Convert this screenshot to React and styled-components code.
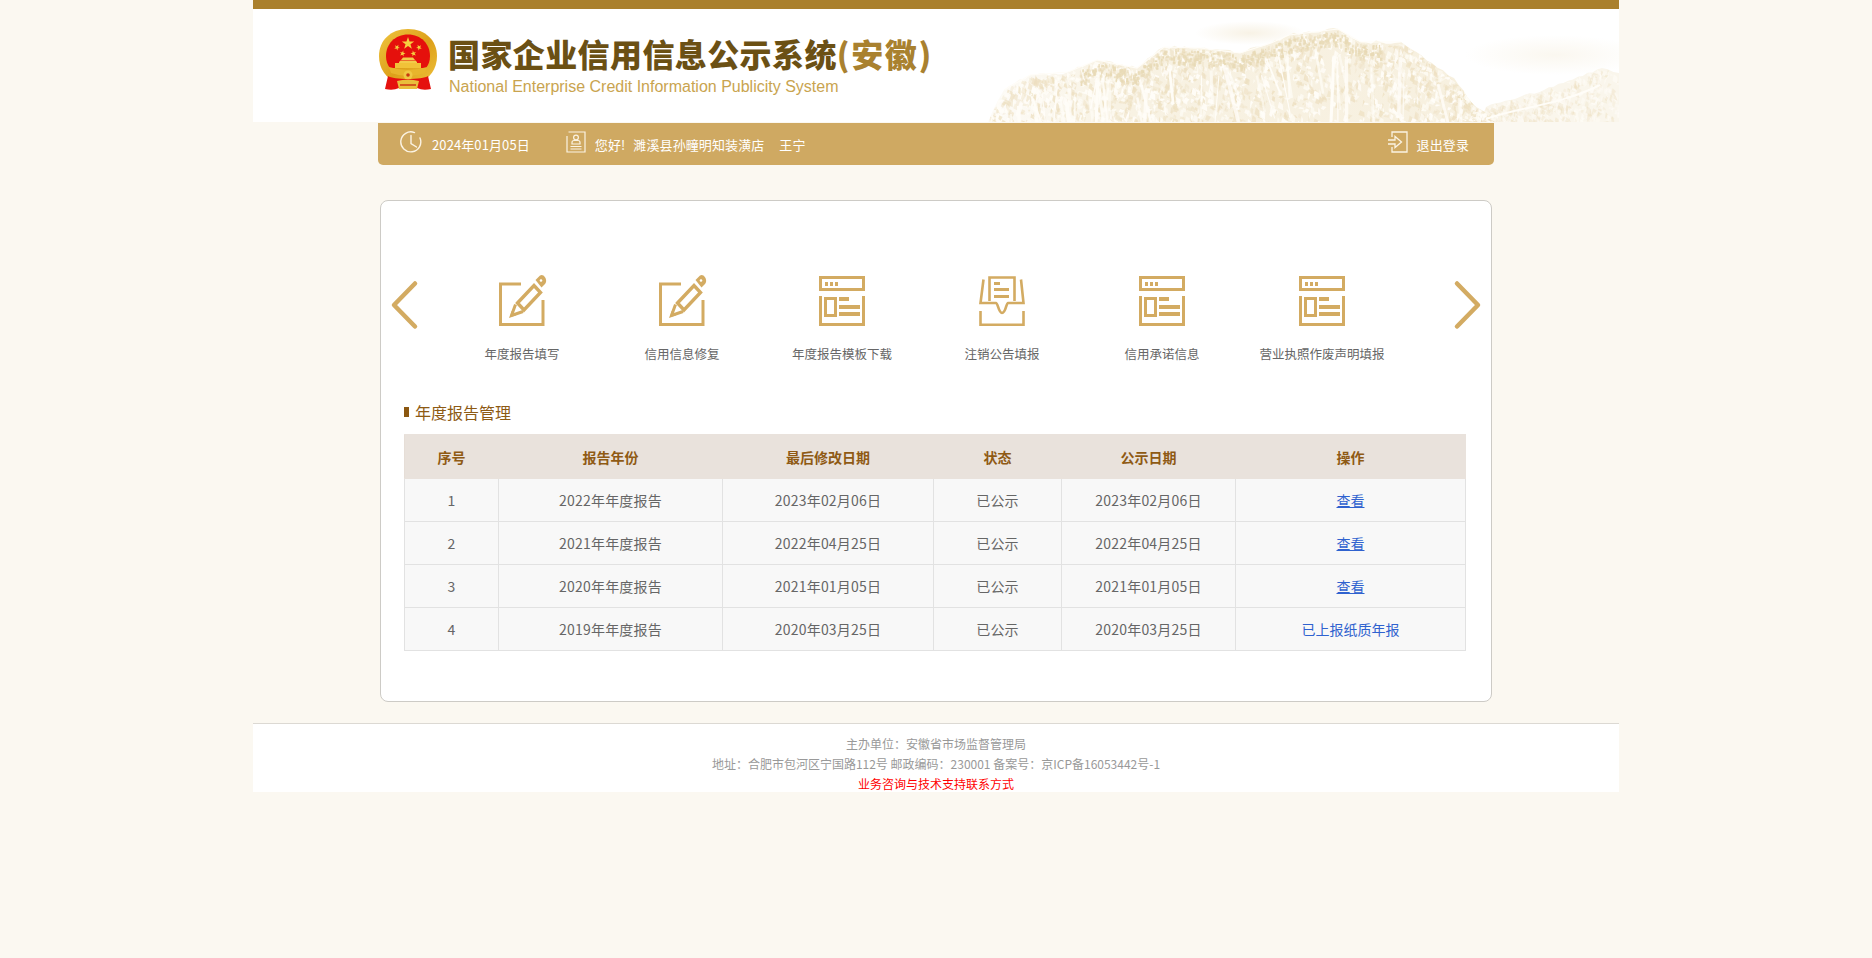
import React from "react";
import styled, { createGlobalStyle } from "styled-components";

const FONT = `"Noto Sans CJK SC", "Liberation Sans", sans-serif`;
const GOLD = "#d3ab62";

const GlobalStyle = createGlobalStyle`
  html, body {
    margin: 0;
    padding: 0;
    background: #fbf8f1;
    font-family: ${FONT};
  }
`;

const Wrapper = styled.div`
  width: 1366px;
  margin: 0 auto;
`;

const Header = styled.header`
  position: relative;
  height: 113px;
  border-top: 9px solid #aa802d;
  background: #fff;
  overflow: hidden;
`;

const Brand = styled.div`
  position: relative;
  z-index: 1;
  display: flex;
  align-items: flex-start;
  padding: 20px 0 0 126px;
`;

const BrandText = styled.div`
  margin-left: 11px;
  padding-top: 2px;
`;

const BrandTitle = styled.div`
  display: flex;
  height: 44px;
  font-size: 32px;
  line-height: 44px;
  font-weight: 900;
  letter-spacing: 0.4px;
  color: #6b5014;
  white-space: nowrap;
  span {
    color: #a9812f;
    letter-spacing: 1.6px;
  }
`;

const BrandSub = styled.div`
  margin-top: 2px;
  margin-left: 1px;
  font-family: "Liberation Sans", sans-serif;
  font-size: 16px;
  line-height: 20px;
  color: #c9a44f;
  white-space: nowrap;
`;

const Scenery = styled.svg`
  position: absolute;
  right: 0;
  top: 0;
`;

const NavBar = styled.nav`
  width: 1116px;
  height: 42px;
  margin: 1px auto 0;
  padding: 0 25px 0 21px;
  box-sizing: border-box;
  display: flex;
  align-items: center;
  background: #cfa962;
  border-radius: 0 0 5px 5px;
  color: #fff;
  font-size: 13px;
  letter-spacing: 0.1px;
`;

const NavItem = styled.div`
  display: flex;
  align-items: center;
  margin-left: ${(p) => (p.$right ? "auto" : `${p.$gap || 0}px`)};
  white-space: nowrap;
  svg {
    margin-right: 9px;
    margin-top: -5px;
  }
`;

const Spaced = styled.span`
  margin-left: ${(p) => p.$gap}px;
`;

const Card = styled.main`
  width: 1112px;
  height: 502px;
  margin: 35px auto 0;
  padding-top: 69px;
  box-sizing: border-box;
  background: #fff;
  border: 1px solid #cdcbc6;
  border-radius: 8px;
`;

const Carousel = styled.div`
  display: flex;
  align-items: flex-start;
  padding-left: 9px;
`;

const Arrow = styled.svg`
  flex: none;
  margin-top: 10px;
`;

const Shortcuts = styled.div`
  display: flex;
  width: 960px;
  margin: 0 50px 0 22px;
`;

const Shortcut = styled.a`
  width: 160px;
  display: flex;
  flex-direction: column;
  align-items: center;
  color: #666;
  font-size: 12.5px;
  line-height: 20px;
  text-decoration: none;
  white-space: nowrap;
  svg {
    margin-bottom: 10px;
  }
`;

const SectionTitle = styled.h2`
  display: flex;
  align-items: center;
  margin: 37px 0 11px 23px;
  font-size: 16px;
  line-height: 22px;
  font-weight: 400;
  color: #8d5a14;
  &::before {
    content: "";
    width: 5px;
    height: 10px;
    margin-right: 6px;
    background: #8b5710;
  }
`;

const Table = styled.table`
  width: 1061px;
  margin-left: 23px;
  table-layout: fixed;
  border-collapse: collapse;
  font-size: 14px;
  text-align: center;
  color: #666;
  th {
    height: 43px;
    padding: 0;
    background: #e9e2dc;
    border: 1px solid #e9e2dc;
    border-left-color: #e6ded7;
    color: #8f5a14;
    font-weight: 700;
  }
  td {
    height: 42px;
    padding: 0;
    background: #f8f8f8;
    border: 1px solid #e2e2e2;
    letter-spacing: 0.2px;
  }
`;

const ActionLink = styled.a`
  color: #2f62cf;
  letter-spacing: 0;
  text-decoration: ${(p) => (p.$plain ? "none" : "underline")};
`;

const Footer = styled.footer`
  height: 69px;
  margin-top: 21px;
  padding-top: 10px;
  box-sizing: border-box;
  border-top: 1px solid #dcd9d3;
  background: #fff;
  text-align: center;
  font-size: 12px;
  line-height: 20px;
  color: #999;
`;

const Hotline = styled.div`
  color: #f00;
`;

// simple seeded random so the mountains come out the same on each load
const seeded = (start) => {
  let s = start;
  return () => {
    s = (s * 16807) % 2147483647;
    return (s - 1) / 2147483646;
  };
};

// break a rough outline into small jagged steps
const roughen = (ridge, seed, amount) => {
  const rnd = seeded(seed);
  const out = [];
  for (let i = 0; i < ridge.length - 1; i++) {
    const [x1, y1] = ridge[i];
    const [x2, y2] = ridge[i + 1];
    const steps = Math.max(1, Math.round((x2 - x1) / 5));
    for (let k = 0; k < steps; k++) {
      const t = k / steps;
      const j = k === 0 ? 0 : (rnd() - 0.5) * amount;
      out.push([x1 + t * (x2 - x1), y1 + t * (y2 - y1) + j]);
    }
  }
  out.push(ridge[ridge.length - 1]);
  return out;
};

const mainRidge = roughen(
  [
    [38, 113], [54, 81], [80, 66], [118, 63], [147, 51], [187, 59], [214, 38], [250, 39],
    [290, 44], [321, 34], [339, 26], [388, 20], [411, 33], [451, 33], [482, 54], [504, 69],
    [522, 94], [545, 113],
  ],
  77,
  3.500
);

const farRidge = roughen(
  [[530, 113], [536, 98], [594, 81], [652, 59], [669, 64], [669, 113]],
  31,
  2
);

const topOf = (ridge, x) => {
  for (let i = 0; i < ridge.length - 1; i++) {
    const [x1, y1] = ridge[i];
    const [x2, y2] = ridge[i + 1];
    if (x >= x1 && x <= x2 && x2 !== x1) return y1 + ((x - x1) / (x2 - x1)) * (y2 - y1);
  }
  return 113;
};

const buildFacets = (ridge, count, from, to, strength, seed) => {
  const rnd = seeded(seed);
  const list = [];
  for (let i = 0; i < count; i++) {
    const x = from + rnd() * (to - from);
    const top = topOf(ridge, x);
    const y = top + Math.pow(rnd(), 1.2) * (113 - top);
    const w = 1 + rnd() * 3.500;
    const h = 2 + rnd() * 8;
    const lean = (rnd() - 0.5) * 5;
    const dark = rnd() > 0.5;
    list.push({
      points: `${x},${y} ${x + w},${y + h * 0.3} ${x + lean + w * 0.5},${y + h} ${x - w * 0.4},${y + h * 0.7}`,
      fill: dark ? "#eddfc0" : "#fffdf8",
      opacity: (dark ? 0.3 + rnd() * 0.5 : 0.5 + rnd() * 0.5) * strength,
    });
  }
  return list;
};

// darker band of trees just under the crest
const buildTrees = (seed) => {
  const rnd = seeded(seed);
  const list = [];
  for (let i = 0; i < 520; i++) {
    const x = 130 + rnd() * 300;
    const y = topOf(mainRidge, x) + 2 + rnd() * 14;
    list.push({ x, y, w: 1 + rnd() * 2, h: 1.500 + rnd() * 3, opacity: 0.5 + rnd() * 0.5 });
  }
  return list;
};

// pale rock faces running down from the ridge
const buildStreaks = (seed) => {
  const rnd = seeded(seed);
  const list = [];
  for (let i = 0; i < 46; i++) {
    const x = 60 + rnd() * 450;
    const y = topOf(mainRidge, x) + 12 + rnd() * 18;
    const lean = (rnd() - 0.3) * 22;
    const len = 25 + rnd() * 60;
    list.push({ d: `M${x} ${y} L${x + lean} ${y + len}`, width: 1 + rnd() * 3, opacity: 0.5 + rnd() * 0.5 });
  }
  return list;
};

const mainFacets = buildFacets(mainRidge, 2000, 40, 545, 1, 4711);
const farFacets = buildFacets(farRidge, 500, 530, 669, 0.6, 911);
const trees = buildTrees(2203);
const streaks = buildStreaks(6101);

const toPoints = (ridge) => ridge.map((p) => p.join(",")).join(" ");

const SceneryArt = () => (
  <Scenery width="669" height="113" viewBox="0 0 669 113">
    <defs>
      <linearGradient id="ridgeFade" x1="0" x2="1" y1="0" y2="0">
        <stop offset="0" stopColor="#f9f4e8" stopOpacity="0.3" />
        <stop offset="0.25" stopColor="#f8f2e3" />
        <stop offset="1" stopColor="#f7f0df" />
      </linearGradient>
      <radialGradient id="haze">
        <stop offset="0" stopColor="#f6efdf" stopOpacity="0.8" />
        <stop offset="1" stopColor="#f6efdf" stopOpacity="0" />
      </radialGradient>
      <clipPath id="mainClip">
        <polygon points={toPoints(mainRidge)} />
      </clipPath>
      <clipPath id="farClip">
        <polygon points={toPoints(farRidge)} />
      </clipPath>
    </defs>
    <ellipse cx="300" cy="24" rx="55" ry="12" fill="url(#haze)" />
    <ellipse cx="605" cy="46" rx="90" ry="20" fill="url(#haze)" opacity="0.6" />
    <polygon points={toPoints(farRidge)} fill="#faf6ec" />
    <g clipPath="url(#farClip)">
      {farFacets.map((f, i) => (
        <polygon key={i} points={f.points} fill={f.fill} opacity={f.opacity} />
      ))}
    </g>
    <polygon points={toPoints(mainRidge)} fill="url(#ridgeFade)" />
    <g clipPath="url(#mainClip)">
      {mainFacets.map((f, i) => (
        <polygon key={i} points={f.points} fill={f.fill} opacity={f.opacity} />
      ))}
      {trees.map((t, i) => (
        <rect key={i} x={t.x} y={t.y} width={t.w} height={t.h} fill="#e8dab6" opacity={t.opacity} />
      ))}
      {streaks.map((s, i) => (
        <path key={i} d={s.d} stroke="#fffdf8" strokeWidth={s.width} opacity={s.opacity} fill="none" />
      ))}
    </g>
    <polyline
      points="54,81 80,66 118,63 147,51 187,59 214,38 250,39 290,44 321,34 339,26 388,20 411,33 451,33"
      fill="none"
      stroke="#fffdf8"
      strokeWidth="1.200"
    />
    <path d="M536 110 C570 98 610 96 650 76" fill="none" stroke="#fffdf8" strokeWidth="2" />
  </Scenery>
);

const starPoints = (cx, cy, r, rot = 0) => {
  const pts = [];
  for (let i = 0; i < 10; i++) {
    const a = -Math.PI / 2 + rot + (i * Math.PI) / 5;
    const rr = i % 2 === 0 ? r : r * 0.4;
    pts.push(`${(cx + rr * Math.cos(a)).toFixed(2)},${(cy + rr * Math.sin(a)).toFixed(2)}`);
  }
  return pts.join(" ");
};

const Emblem = () => (
  <svg width="58" height="63" viewBox="0 0 58 63" style={{ flex: "none" }}>
    <defs>
      <linearGradient id="wreath" x1="0" x2="1" y1="0" y2="1">
        <stop offset="0" stopColor="#efc53f" />
        <stop offset="0.55" stopColor="#dda01a" />
        <stop offset="1" stopColor="#eec03a" />
      </linearGradient>
    </defs>
    <path d="M29 0 C47 0 58 12 58 27 C58 40 51 49 40 54 H18 C7 49 0 40 0 27 C0 12 11 0 29 0 Z" fill="url(#wreath)" />
    <path d="M29 5.500 C42 5.500 51 15 51 27 C51 32 49.500 36 47 39 H11 C8.500 36 7 32 7 27 C7 15 16 5.500 29 5.500 Z" fill="#e5100c" />
    <polygon points={starPoints(29, 14.500, 6.500)} fill="#f6d040" />
    <polygon points={starPoints(18, 18.500, 3, 0.500)} fill="#f6d040" />
    <polygon points={starPoints(40, 18.500, 3, -0.500)} fill="#f6d040" />
    <polygon points={starPoints(23.500, 24.500, 3, 0.250)} fill="#f6d040" />
    <polygon points={starPoints(34.500, 24.500, 3, -0.250)} fill="#f6d040" />
    <path d="M22 31 H36 L34 28.500 H24 Z M20 34 H38 V33 L36.500 31.500 H21.500 L20 33 Z" fill="#f3cb4a" />
    <rect x="16" y="34" width="26" height="5" fill="#f1c238" />
    <path d="M10 38 Q29 44 48 38 L46 44 Q29 50 12 44 Z" fill="#e8b52c" />
    <circle cx="29" cy="46" r="4.500" fill="#f0c843" />
    <circle cx="29" cy="46" r="1.800" fill="#c9370f" />
    <path d="M9 47 C14 51 44 51 49 47 L52 60 Q44 62 38 59 H20 Q14 62 6 60 Z" fill="#e5110e" />
    <path d="M18 52 Q29 49 40 52 L38 60 H20 Z" fill="#e9bf3c" />
    <path d="M21 56 H37" stroke="#c4150c" strokeWidth="1.200" />
  </svg>
);

const ClockIcon = () => (
  <svg width="24" height="24" viewBox="0 0 24 24" fill="none" stroke="#fbf3e3" strokeWidth="1.400" strokeLinecap="round">
    <path d="M15.500 2.600 A10 10 0 1 0 21 8" />
    <path d="M12 5.500 V13.500 L17.500 17" />
  </svg>
);

const ProfileIcon = () => (
  <svg width="20" height="22" viewBox="0 0 20 22" fill="none" stroke="#fbf3e3" strokeWidth="1.200">
    <path d="M2.500 1 H19 V21 H1 V5" />
    <circle cx="10" cy="6.500" r="2.400" />
    <path d="M6 13 V11.500 Q6 9.500 8 9.500 H12 Q14 9.500 14 11.500 V13 Z" />
    <path d="M4.500 15.500 H15.500 M4.500 18 H15.500" />
  </svg>
);

const LogoutIcon = () => (
  <svg width="20" height="22" viewBox="0 0 20 22" fill="none" stroke="#fbf3e3" strokeWidth="1.300">
    <path d="M4 6 V1 H19 V21 H4 V16" />
    <path d="M0 9 H7 V5.500 L13.500 11 L7 16.500 V13 H0" />
  </svg>
);

const PencilIcon = () => (
  <svg width="64" height="64" viewBox="0 0 64 64" fill="none" stroke={GOLD} strokeWidth="3">
    <path d="M31 14 H10.500 V54.500 H53 V30" />
    <path d="M27.500 33 L44 15.500 L50.500 22.500 L34 40 Z" strokeWidth="3.400" />
    <path d="M25.500 34.500 L21.500 45.500 L33 41.500" />
    <path d="M20 47 L21.500 41 L26 45.500 Z" fill={GOLD} stroke="none" />
    <path d="M45.500 10 L50 5.500 Q53.500 4 55.500 8 Q57 11.500 55 14 L51.500 17.500 Z" fill={GOLD} stroke="none" />
    <circle cx="51" cy="10.500" r="1.300" fill="#fff" stroke="none" />
  </svg>
);

const WindowIcon = () => (
  <svg width="64" height="64" viewBox="0 0 64 64" fill="none" stroke={GOLD} strokeWidth="3">
    <rect x="10.500" y="7.500" width="43" height="12" />
    <path d="M15 12 h3 v4 h-3 z M20 12 h3 v4 h-3 z M25 12 h3 v4 h-3 z" fill={GOLD} stroke="none" />
    <path d="M10.500 26 V54.500 H53.500 V26" />
    <rect x="15.500" y="28.500" width="10" height="17" />
    <path d="M29 27 h10 v4 h-10 z M29 35 h21 v4 h-21 z M29 42 h21 v4 h-21 z" fill={GOLD} stroke="none" />
  </svg>
);

const InboxIcon = () => (
  <svg width="64" height="64" viewBox="0 0 64 64" fill="none" stroke={GOLD} strokeWidth="2.600">
    <path d="M19.500 31 V7.500 H44.500 V31" />
    <path d="M24 12 h6 v3 h-6 z M24 18 h15 v3 h-15 z M24 25 h15 v3 h-15 z" fill={GOLD} stroke="none" />
    <path d="M13.500 9.500 L10.500 33 H26 C28 33 28.500 43 32 43 C36 43 36 33 38 33 H53.500 L51 9.500" />
    <path d="M10.500 41 V54.700 H53.500 V41" />
  </svg>
);

const Chevron = ({ flip }) => (
  <Arrow width="30" height="50" viewBox="0 0 30 50" fill="none" stroke={GOLD} strokeWidth="4.500" strokeLinecap="round" strokeLinejoin="round">
    <path d={flip ? "M5 3.500 L26 25 L5 46.500" : "M25 3.500 L4 25 L25 46.500"} />
  </Arrow>
);

const shortcuts = [
  { label: "年度报告填写", icon: <PencilIcon /> },
  { label: "信用信息修复", icon: <PencilIcon /> },
  { label: "年度报告模板下载", icon: <WindowIcon /> },
  { label: "注销公告填报", icon: <InboxIcon /> },
  { label: "信用承诺信息", icon: <WindowIcon /> },
  { label: "营业执照作废声明填报", icon: <WindowIcon /> },
];

const reports = [
  { id: 1, year: "2022年年度报告", modified: "2023年02月06日", status: "已公示", published: "2023年02月06日", action: "查看" },
  { id: 2, year: "2021年年度报告", modified: "2022年04月25日", status: "已公示", published: "2022年04月25日", action: "查看" },
  { id: 3, year: "2020年年度报告", modified: "2021年01月05日", status: "已公示", published: "2021年01月05日", action: "查看" },
  { id: 4, year: "2019年年度报告", modified: "2020年03月25日", status: "已公示", published: "2020年03月25日", action: "已上报纸质年报", plain: true },
];

const columns = [94, 224, 211, 128, 174, 230];
const headings = ["序号", "报告年份", "最后修改日期", "状态", "公示日期", "操作"];

const App = () => {
  return (
    <>
      <GlobalStyle />
      <Wrapper>
        <Header>
          <SceneryArt />
          <Brand>
            <Emblem />
            <BrandText>
              <BrandTitle>
                国家企业信用信息公示系统<span>(安徽)</span>
              </BrandTitle>
              <BrandSub>National Enterprise Credit Information Publicity System</BrandSub>
            </BrandText>
          </Brand>
        </Header>
        <NavBar>
          <NavItem>
            <ClockIcon />
            2024年01月05日
          </NavItem>
          <NavItem $gap={36}>
            <ProfileIcon />
            您好!
            <Spaced $gap={8}>濉溪县孙疃明知装潢店</Spaced>
            <Spaced $gap={15}>王宁</Spaced>
          </NavItem>
          <NavItem $right>
            <LogoutIcon />
            退出登录
          </NavItem>
        </NavBar>
        <Card>
          <Carousel>
            <Chevron />
            <Shortcuts>
              {shortcuts.map((item) => (
                <Shortcut key={item.label}>
                  {item.icon}
                  {item.label}
                </Shortcut>
              ))}
            </Shortcuts>
            <Chevron flip />
          </Carousel>
          <SectionTitle>年度报告管理</SectionTitle>
          <Table>
            <colgroup>
              {columns.map((w, i) => (
                <col key={i} width={w} />
              ))}
            </colgroup>
            <thead>
              <tr>
                {headings.map((h) => (
                  <th key={h}>{h}</th>
                ))}
              </tr>
            </thead>
            <tbody>
              {reports.map((r) => (
                <tr key={r.id}>
                  <td>{r.id}</td>
                  <td>{r.year}</td>
                  <td>{r.modified}</td>
                  <td>{r.status}</td>
                  <td>{r.published}</td>
                  <td>
                    <ActionLink $plain={r.plain} href="#">
                      {r.action}
                    </ActionLink>
                  </td>
                </tr>
              ))}
            </tbody>
          </Table>
        </Card>
        <Footer>
          <div>主办单位：安徽省市场监督管理局</div>
          <div>地址：合肥市包河区宁国路112号 邮政编码：230001 备案号：京ICP备16053442号-1</div>
          <Hotline>业务咨询与技术支持联系方式</Hotline>
        </Footer>
      </Wrapper>
    </>
  );
};

export default App;
